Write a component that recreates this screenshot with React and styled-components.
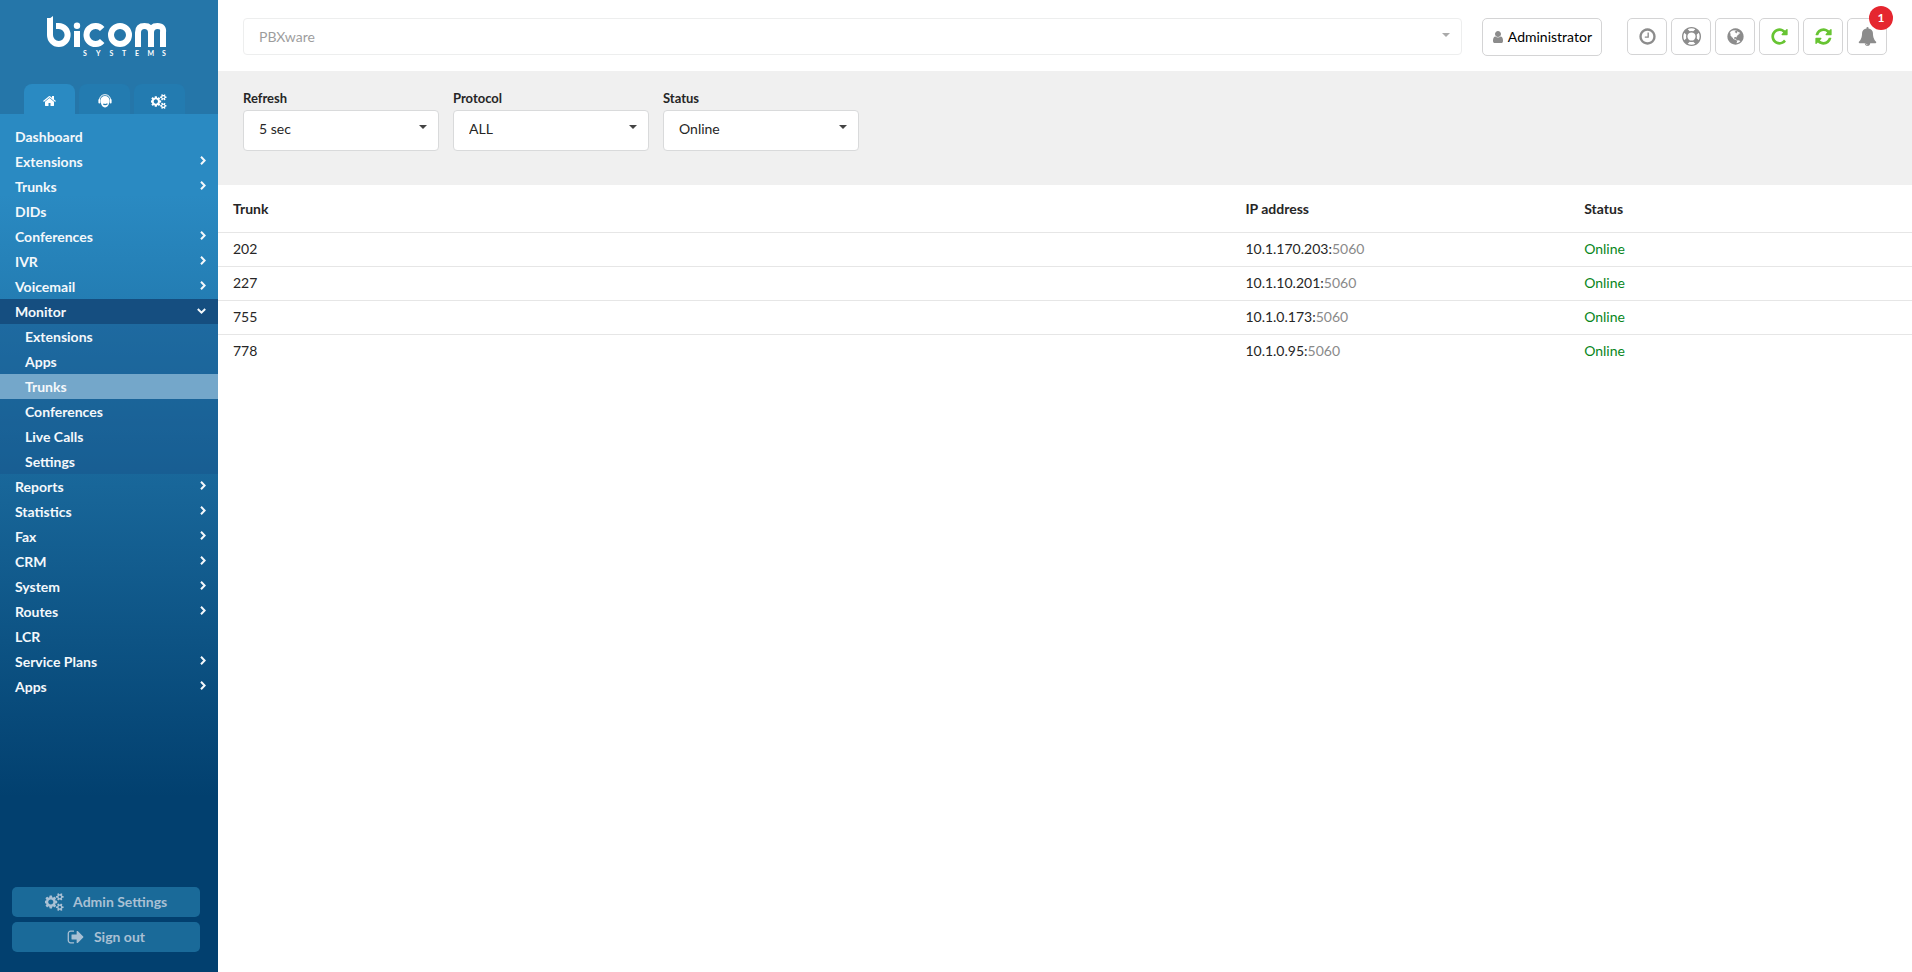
import React, { useState } from 'react'
import styled, { createGlobalStyle } from 'styled-components'

const paths = {
    home: 'M1408 992v480q0 26-19 45t-45 19h-384v-384h-256v384h-384q-26 0-45-19t-19-45v-480q0-1 .5-3t.5-3l575-474 575 474q1 2 1 6zm223-69l-62 74q-8 9-21 11h-3q-13 0-21-7l-692-577-692 577q-12 8-24 7-13-2-21-11l-62-74q-8-10-7-23.5t11-21.5l719-599q32-26 76-26t76 26l244 204v-195q0-14 9-23t23-9h192q14 0 23 9t9 23v408l219 182q10 8 11 21.5t-7 23.5z',
    cogs: 'M832 896q0-106-75-181t-181-75-181 75-75 181 75 181 181 75 181-75 75-181zm768 512q0-52-38-90t-90-38-90 38-38 90q0 53 37.5 90.5t90.5 37.5 90.5-37.5 37.5-90.5zm0-1024q0-52-38-90t-90-38-90 38-38 90q0 53 37.5 90.5t90.5 37.5 90.5-37.5 37.5-90.5zm-384 421v185q0 10-7 19.5t-16 10.5l-155 24q-11 35-32 76 34 48 90 115 7 11 7 20 0 12-7 19-23 30-82.5 89.5t-78.5 59.5q-11 0-21-7l-115-90q-37 19-77 31-11 108-23 155-7 24-30 24h-186q-11 0-20-7.5t-10-17.5l-23-153q-34-10-75-31l-118 89q-7 7-20 7-11 0-21-8-144-133-144-160 0-9 7-19 10-14 41-53t47-61q-23-44-35-82l-152-24q-10-1-17-9.5t-7-19.5v-185q0-10 7-19.5t16-10.5l155-24q11-35 32-76-34-48-90-115-7-11-7-20 0-12 7-20 22-30 82-89t79-59q11 0 21 7l115 90q34-18 77-32 11-108 23-154 7-24 30-24h186q11 0 20 7.5t10 17.5l23 153q34 10 75 31l118-89q8-7 20-7 11 0 21 8 144 133 144 160 0 8-7 19-12 16-42 54t-45 60q23 48 34 82l152 23q10 2 17 10.5t7 19.5zm640 533v140q0 16-149 31-12 27-30 52 51 113 51 138 0 4-4 7-122 71-124 71-8 0-46-47t-52-68q-20 2-30 2t-30-2q-14 21-52 68t-46 47q-2 0-124-71-4-3-4-7 0-25 51-138-18-25-30-52-149-15-149-31v-140q0-16 149-31 13-29 30-52-51-113-51-138 0-4 4-7 4-2 35-20t59-34 30-16q8 0 46 46.5t52 67.5q20-2 30-2t30 2q51-71 92-112l6-2q4 0 124 70 4 3 4 7 0 25-51 138 17 23 30 52 149 15 149 31zm0-1024v140q0 16-149 31-12 27-30 52 51 113 51 138 0 4-4 7-122 71-124 71-8 0-46-47t-52-68q-20 2-30 2t-30-2q-14 21-52 68t-46 47q-2 0-124-71-4-3-4-7 0-25 51-138-18-25-30-52-149-15-149-31v-140q0-16 149-31 13-29 30-52-51-113-51-138 0-4 4-7 4-2 35-20t59-34 30-16q8 0 46 46.5t52 67.5q20-2 30-2t30 2q51-71 92-112l6-2q4 0 124 70 4 3 4 7 0 25-51 138 17 23 30 52 149 15 149 31z',
    signOut: 'M704 1440q0 4 1 20t.5 26.5-3 23.5-10 19.5-20.5 6.5h-320q-119 0-203.5-84.5t-84.5-203.5v-704q0-119 84.5-203.5t203.5-84.5h320q13 0 22.5 9.5t9.5 22.5q0 4 1 20t.5 26.5-3 23.5-10 19.5-20.5 6.5h-320q-66 0-113 47t-47 113v704q0 66 47 113t113 47h312l11.5 1 11.5 3 8 5.5 7 9 2 13.5zm928-544q0 26-19 45l-544 544q-19 19-45 19t-45-19-19-45v-288h-448q-26 0-45-19t-19-45v-384q0-26 19-45t45-19h448v-288q0-26 19-45t45-19 45 19l544 544q19 19 19 45z',
    user: 'M1536 1399q0 109-62.5 187t-150.5 78h-854q-88 0-150.5-78t-62.5-187q0-85 8.5-160.5t31.5-152 58.5-131 94-89 134.5-34.5q131 128 313 128t313-128q76 0 134.5 34.5t94 89 58.5 131 31.5 152 8.5 160.5zm-256-887q0 159-112.5 271.5t-271.5 112.5-271.5-112.5-112.5-271.5 112.5-271.5 271.5-112.5 271.5 112.5 112.5 271.5z',
    clock: 'M1024 544v448q0 14-9 23t-23 9h-320q-14 0-23-9t-9-23v-64q0-14 9-23t23-9h224v-352q0-14 9-23t23-9h64q14 0 23 9t9 23zm416 352q0-148-73-273t-198-198-273-73-273 73-198 198-73 273 73 273 198 198 273 73 273-73 198-198 73-273zm224 0q0 209-103 385.5t-279.5 279.5-385.5 103-385.5-103-279.5-279.5-103-385.5 103-385.5 279.5-279.5 385.5-103 385.5 103 279.5 279.5 103 385.5z',
    lifeRing: 'M896 0q182 0 348 71t286 191 191 286 71 348-71 348-191 286-286 191-348 71-348-71-286-191-191-286-71-348 71-348 191-286 286-191 348-71zm0 128q-190 0-361 90l194 194q82-28 167-28t167 28l194-194q-171-90-361-90zm-678 1129l194-194q-28-82-28-167t28-167l-194-194q-90 171-90 361t90 361zm678 407q190 0 361-90l-194-194q-82 28-167 28t-167-28l-194 194q171 90 361 90zm0-384q159 0 271.5-112.5t112.5-271.5-112.5-271.5-271.5-112.5-271.5 112.5-112.5 271.5 112.5 271.5 271.5 112.5zm484-217l194 194q90-171 90-361t-90-361l-194 194q28 82 28 167t-28 167z',
    globe: 'M896 128q209 0 385.5 103t279.5 279.5 103 385.5-103 385.5-279.5 279.5-385.5 103-385.5-103-279.5-279.5-103-385.5 103-385.5 279.5-279.5 385.5-103zm274 521q-2 1-9.5 9.5t-13.5 9.5q2 0 4.5-5t5-11 3.5-7q6-7 22-15 14-6 52-12 34-8 51 11-2-2 9.5-13t14.5-12q3-2 15-4.5t15-7.5l2-22q-12 1-17.5-7t-6.5-21q0 2-6 8 0-7-4.5-8t-11.5 1-9 1q-10-3-15-7.5t-8-16.5-4-15q-2-5-9.5-11t-9.5-10q-1-2-2.5-5.5t-3-6.5-4-5.5-5.5-2.5-7 5-7.5 10-4.5 5q-3-2-6-1.5t-4.5 1-4.5 3-5 3.5q-3 2-8.5 3t-8.5 2q15-5-1-11-10-4-16-3 9-4 7.5-12t-8.5-14h5q-1-4-8.5-8.5t-17.5-8.5-13-6q-8-5-34-9.5t-33-.5q-5 6-4.5 10.5t4 14 3.5 12.5q1 6-5.5 13t-6.5 12q0 7 14 15.5t10 21.5q-3 8-16 16t-16 12q-5 8-1.5 18.5t10.5 16.5q2 2 1.5 4t-3.5 4.5-5.5 4-6.5 3.5l-3 2q-11 5-20.5-6t-13.5-26q-7-25-16-30-23-8-29 1-5-13-41-26-25-9-58-4 6-1 0-15-7-15-19-12 3-6 4-17.5t1-13.5q3-13 12-23 1-1 7-8.5t9.5-13.5.5-6q35 4 50-11 5-5 11.5-17t10.5-17q9-6 14-5.5t14.5 5.5 14.5 5q14 1 15.5-11t-7.5-20q12 1 3-17-4-7-8-9-12-4-27 5-8 4 2 8-1-1-9.5 10.5t-16.5 17.500-16-5q-1-1-5.5-13.5t-9.500-13.5q-8 0-16 15 3-8-11-15t-24-8q19-12-8-27-7-4-20.5-5t-19.500 4q-5 7-5.500 11.500t5 8 10.500 5.500 11.500 4 8.500 3q14 10 8 14-2 1-8.500 3.500t-11.500 4.500-6 4q-3 4 0 14t-2 14q-5-5-9-17.500t-7-16.500q7 9-25 6l-10-1q-4 0-16 2t-20.500 1-13.500-8q-4-8 0-20 1-4 4-2-4-3-11-9.500t-10-8.500q-46 15-94 41 6 1 12-1 5-2 13-6.500t10-5.500q34-14 42-7l5-5q14 16 20 25-7-4-30-1-20 6-22 12 7 12 5 18-4-3-11.500-10t-14.500-11-15-5q-16 0-22 1-146 80-235 222 7 7 12 8 4 1 5 9t2.500 11 11.500-3q9 8 3 19 1-1 44 27 19 17 21 21 3 11-10 18-1-2-9-9t-9-4q-3 5 .5 18.500t10.500 12.500q-7 0-9.500 16t-2.500 35.500-1 23.500l2 1q-3 12 5.500 34.500t21.500 19.500q-13 3 20 43 6 8 8 9 3 2 12 7.500t15 10 10 10.500q4 5 10 22.500t14 23.500q-2 6 9.500 20t10.500 23q-1 0-2.500 1t-2.500 1q3 7 15.500 14t15.500 13q1 3 2 10t3 11 8 2q2-20-24-62-15-25-17-29-3-5-5.500-15.500t-4.500-14.500q2 0 6 1.500t8.500 3.500 7.500 4 2 3q-3 7 2 17.500t12 18.500 17 19 12 13q6 6 14 19.500t0 13.500q9 0 20 10.500t17 19.500q5 8 8 26t5 24q2 7 8.500 13.500t12.500 9.500l16 8 13 7q5 2 18.500 10.500t21.500 11.500q10 4 16 4t14.500-2.500 13.500-3.500q15-2 29 15t21 21q36 19 55 11-2 1 .5 7.500t8 15.500 9 14.500 5.500 8.500q5 6 18 15t18 15q6-4 7-9-3 8 7 20t18 10q14-3 14-32-31 15-49-18 0-1-2.500-5.500t-4-8.500-2.500-8.500 0-7.500 5-3q9 0 10-3.500t-2-12.500-4-13q-1-8-11-20t-12-15q-5 9-16 8t-16-9q0 1-1.500 5.500t-1.500 6.500q-13 0-15-1 1-3 2.500-17.500t3.500-22.500q1-4 5.500-12t7.500-14.500 4-12.500-4.500-9.500-17.500-2.500q-19 1-26 20-1 3-3 10.500t-5 11.500-9 7q-7 3-24 2t-24-5q-13-8-22.500-29t-9.500-37q0-10 2.500-26.500t3-25-5.500-24.500q3-2 9-9.500t10-10.500q2-1 4.500-1.500t4.500 0 4-1.500 3-6q-1-1-4-3-3-3-4-3 7 3 28.500-1.500t27.500 1.500q15 11 22-2 0-1-2.500-9.500t-.5-13.500q5 27 29 9 3 3 15.500 5t17.500 5q3 2 7 5.500t5.500 4.500 5-.5 8.500-6.500q10 14 12 24 11 40 19 44 7 3 11 2t4.500-9.500 0-14-1.500-12.500l-1-8v-18l-1-8q-15-3-18.500-12t1.500-18.500 15-18.500q1-1 8-3.500t15.500-6.500 12.500-8q21-19 15-35 7 0 11-9-1 0-5-3t-7.500-5-4.500-2q9-5 2-16 5-3 7.500-11t7.500-10q9 12 21 2 8-8 1-16 5-7 20.500-10.500t18.500-9.500q7 2 8-2t1-12 3-12q4-5 15-9t13-5l17-11q3-4 0-4 18 2 31-11 10-11-6-20 3-6-3-9.500t-15-5.500q3-1 11.500-.5t10.500-1.500q15-10-7-16-17-5-43 12zm-163 877q206-36 351-189-3-3-12.500-4.500t-12.500-3.500q-18-7-24-8 1-7-2.500-13t-8-9-12.500-8-11-7q-2-2-7-6t-7-5.500-7.500-4.500-8.500-2-10 1l-3 1q-3 1-5.500 2.500t-5.500 3-4 3 0 2.500q-21-17-36-22-5-1-11-5.500t-10.500-7-10-1.500-11.500 7q-5 5-6 15t-2 13q-7-5 0-17.500t2-18.500q-3-6-10.500-4.500t-12 4.500-11.500 8.500-9 6.500-8.500 5.500-8.500 7.500q-3 4-6 12t-5 11q-2-4-11.500-6.500t-9.500-5.500q2 10 4 35t5 38q7 31-12 48-27 25-29 40-4 22 12 26 0 7-8 20.500t-7 21.500q0 6 2 16z',
    repeat: 'M1664 256v448q0 26-19 45t-45 19h-448q-42 0-59-40-17-39 14-69l138-138q-148-137-349-137-104 0-198.5 40.5t-163.5 109.5-109.5 163.5-40.5 198.5 40.5 198.5 109.5 163.5 163.5 109.5 198.5 40.5q119 0 225-52t179-147q7-10 23-12 15 0 25 9l137 138q9 8 9.5 20.5t-7.5 22.5q-109 132-264 204.5t-327 72.5q-156 0-298-61t-245-164-164-245-61-298 61-298 164-245 245-164 298-61q147 0 284.5 55.5t244.5 156.5l130-129q29-31 70-14 39 17 39 59z',
    refresh: 'M1639 1056q0 5-1 7-64 268-268 434.5t-478 166.5q-146 0-282.5-55t-243.5-157l-129 129q-19 19-45 19t-45-19-19-45v-448q0-26 19-45t45-19h448q26 0 45 19t19 45-19 45l-137 137q71 66 161 102t187 36q134 0 250-65t186-179q11-17 53-117 8-23 30-23h192q13 0 22.5 9.5t9.5 22.5zm25-800v448q0 26-19 45t-45 19h-448q-26 0-45-19t-19-45 19-45l138-138q-148-137-349-137-134 0-250 65t-186 179q-11 17-53 117-8 23-30 23h-199q-13 0-22.5-9.5t-9.5-22.5v-7q65-268 270-434.5t480-166.5q146 0 284 55.5t245 156.5l130-129q19-19 45-19t45 19 19 45z',
    bell: 'M912 1696q0-16-16-16-59 0-101.5-42.5t-42.5-101.5q0-16-16-16t-16 16q0 73 51.5 124.5t124.5 51.5q16 0 16-16zm816-288q0 52-38 90t-90 38h-448q0 106-75 181t-181 75-181-75-75-181h-448q-52 0-90-38t-38-90q50-42 91-88t85-119.5 74.5-158.5 50-206 19.5-260q0-152 117-282.5t307-158.5q-8-19-8-39 0-40 28-68t68-28 68 28 28 68q0 20-8 39 190 28 307 158.5t117 282.5q0 139 19.5 260t50 206 74.5 158.5 85 119.5 91 88z',
}

const Icon = ({ name, size = 16 }) => {
    const width = name === 'cogs' ? 1920 : 1792
    return (
        <svg width={size * width / 1792} height={size} viewBox={`0 0 ${width} 1792`} fill="currentColor" aria-hidden="true">
            <path d={paths[name]} />
        </svg>
    )
}

const Headset = () => (
    <svg width="14" height="14" viewBox="0 0 14 14" fill="none" aria-hidden="true">
        <path d="M1.400 6.500C1.400 2.900 3.600 .7 7 .7s5.600 2.200 5.600 5.800" stroke="#fff" strokeWidth="1" />
        <path d="M7 2c2.700 0 4.400 1.700 4.400 4.500 0 3.600-1.600 6.900-4.400 6.900S2.600 10.100 2.600 6.500C2.600 3.700 4.300 2 7 2z" fill="#fff" />
        <rect x="0.400" y="5" width="2" height="4.500" rx="1" fill="#fff" />
        <rect x="11.600" y="5" width="2" height="4.500" rx="1" fill="#fff" />
        <path d="M5.300 10q1.700 1.200 4.200-.2" stroke="#237bb0" strokeWidth="1.200" />
    </svg>
)

const Arrow = ({ open }) => (
    <svg width={open ? 9 : 6} height={open ? 6 : 9} viewBox={open ? '0 0 9 6' : '0 0 6 9'} fill="none" stroke="currentColor" strokeWidth="2" aria-hidden="true">
        <path d={open ? 'M.8 1L4.500 4.600 8.200 1' : 'M1 .8L4.600 4.500 1 8.200'} />
    </svg>
)

const Logo = () => (
    <svg width="124" height="42" viewBox="0 0 124 42" role="img" aria-label="bicom systems">
        <g fill="none" stroke="#fff" strokeWidth="6">
            <path d="M6 2v17a8.800 9 0 1 0 8.800-9h-2.800" />
            <path d="M33 15v16M58.200 13A9 9 0 1 0 58.200 25" />
            <circle cx="76" cy="19" r="9" />
            <path d="M94 31V16.500q0-6.500 6.500-6.500T107 16.500v14.500M107 16.500q0-6.500 6.500-6.500T119 16.500v14.500" />
        </g>
        <path d="M3 4.500L9 0v6H3z" fill="#fff" />
        <circle cx="33" cy="9.800" r="3.200" fill="#fff" />
        <text x="39 52 65.500 78 91 103.500 118" y="40" fill="#fff" fontSize="7" fontWeight="700" fontFamily="Lato, sans-serif">SYSTEMS</text>
    </svg>
)

const menu = [
    { name: 'Dashboard', leaf: true },
    { name: 'Extensions' },
    { name: 'Trunks' },
    { name: 'DIDs', leaf: true },
    { name: 'Conferences' },
    { name: 'IVR' },
    { name: 'Voicemail' },
    { name: 'Monitor', children: ['Extensions', 'Apps', 'Trunks', 'Conferences', 'Live Calls', 'Settings'] },
    { name: 'Reports' },
    { name: 'Statistics' },
    { name: 'Fax' },
    { name: 'CRM' },
    { name: 'System' },
    { name: 'Routes' },
    { name: 'LCR', leaf: true },
    { name: 'Service Plans' },
    { name: 'Apps' },
]

const trunks = [
    { trunk: '202', ip: '10.1.170.203', port: '5060', status: 'Online' },
    { trunk: '227', ip: '10.1.10.201', port: '5060', status: 'Online' },
    { trunk: '755', ip: '10.1.0.173', port: '5060', status: 'Online' },
    { trunk: '778', ip: '10.1.0.95', port: '5060', status: 'Online' },
]

const Sidebar = () => (
    <Aside>
        <Brand>
            <Logo />
            <Tabs>
                <Tab $active aria-label="Home"><Icon name="home" size={14} /></Tab>
                <Tab aria-label="Agents"><Headset /></Tab>
                <Tab aria-label="Settings"><Icon name="cogs" size={15} /></Tab>
            </Tabs>
        </Brand>
        <Menu>
            {menu.map(item => (
                <li key={item.name}>
                    <MenuLink href="#" $open={!!item.children}>
                        {item.name}
                        {item.leaf ? null : <Arrow open={!!item.children} />}
                    </MenuLink>
                    {item.children ?
                        <SubMenu>
                            {item.children.map(name => (
                                <li key={name}><SubLink href="#" $active={name === 'Trunks'}>{name}</SubLink></li>
                            ))}
                        </SubMenu> : null}
                </li>
            ))}
        </Menu>
        <AsideFooter>
            <AsideButton><Icon name="cogs" size={18} />Admin Settings</AsideButton>
            <AsideButton><Icon name="signOut" size={18} />Sign out</AsideButton>
        </AsideFooter>
    </Aside>
)

const Filter = ({ id, label, options, initial }) => {
    const [value, setValue] = useState(initial)
    return (
        <Field>
            <label htmlFor={id}>{label}</label>
            <SelectBox>
                <Select id={id} value={value} onChange={e => setValue(e.target.value)}>
                    {options.map(option => <option key={option}>{option}</option>)}
                </Select>
                <Caret />
            </SelectBox>
        </Field>
    )
}

const App = () => (
    <Layout>
        <GlobalStyle />
        <Sidebar />
        <Main>
            <TopBar>
                <ServerBox>
                    <ServerSelect aria-label="Server" disabled><option>PBXware</option></ServerSelect>
                    <Caret />
                </ServerBox>
                <UserButton><Icon name="user" size={14} />Administrator</UserButton>
                <Tools>
                    <ToolButton aria-label="Time"><Icon name="clock" size={19} /></ToolButton>
                    <ToolButton aria-label="Help"><Icon name="lifeRing" size={19} /></ToolButton>
                    <ToolButton aria-label="Language"><Icon name="globe" size={19} /></ToolButton>
                    <ToolButton $green aria-label="Reload"><Icon name="repeat" size={19} /></ToolButton>
                    <ToolButton $green aria-label="Restart"><Icon name="refresh" size={19} /></ToolButton>
                    <ToolButton aria-label="Notifications"><Icon name="bell" size={19} /><Badge>1</Badge></ToolButton>
                </Tools>
            </TopBar>
            <Filters>
                <Filter id="refresh" label="Refresh" initial="5 sec" options={['5 sec', '10 sec', '30 sec']} />
                <Filter id="protocol" label="Protocol" initial="ALL" options={['ALL', 'SIP', 'IAX']} />
                <Filter id="status" label="Status" initial="Online" options={['Online', 'Offline']} />
            </Filters>
            <Table>
                <thead>
                    <tr>
                        <th>Trunk</th>
                        <th>IP address</th>
                        <th>Status</th>
                    </tr>
                </thead>
                <tbody>
                    {trunks.map(row => (
                        <tr key={row.trunk}>
                            <td>{row.trunk}</td>
                            <td>{row.ip}:<Port>{row.port}</Port></td>
                            <Status>{row.status}</Status>
                        </tr>
                    ))}
                </tbody>
            </Table>
        </Main>
    </Layout>
)

export default App

const GlobalStyle = createGlobalStyle`
*{
    box-sizing:border-box;
}
body{
    margin:0;
    background:#fff;
    color:#262626;
    font-family:Lato, sans-serif;
    font-size:14px;
    line-height:18px;
}
button,select{
    font:inherit;
}
ul{
    list-style:none;
    margin:0;
    padding:0;
}
svg{
    display:block;
    flex:none;
}
`
const Layout = styled.div`
display:flex;
min-height:100vh;
`
const Aside = styled.aside`
display:flex;
flex-direction:column;
flex:none;
width:218px;
background:linear-gradient(#2a8ac2 0%, #2a8ac2 20%, #186699 50%, #02406f 82%, #02406f 100%);
color:#fff;
`
const Brand = styled.div`
display:flex;
flex-direction:column;
justify-content:space-between;
height:114px;
padding:16px 24px 0;
background:#2576a9;
svg[role=img]{
    margin-left:20px;
}
`
const Tabs = styled.div`
display:flex;
gap:4px;
`
const Tab = styled.button.attrs({ type: 'button' })`
display:flex;
align-items:center;
justify-content:center;
width:51px;
height:30px;
padding:4px 0 0;
border:0;
border-radius:8px 8px 0 0;
background:${props => props.$active ? '#2a8ac2' : '#237bb0'};
color:#fff;
`
const Menu = styled.ul`
padding-top:10px;
flex:1;
`
const MenuLink = styled.a`
display:flex;
align-items:center;
justify-content:space-between;
height:25px;
padding:0 12px 0 15px;
background:${props => props.$open ? '#154e80' : 'transparent'};
color:#f4f8fb;
font-weight:700;
text-decoration:none;
svg{
    margin-bottom:2px;
}
`
const SubMenu = styled.ul`
background:rgba(24,78,132,.35);
`
const SubLink = styled(MenuLink)`
padding-left:25px;
background:${props => props.$active ? '#74a7ca' : 'transparent'};
`
const AsideFooter = styled.div`
display:flex;
flex-direction:column;
gap:5px;
padding:20px 18px 20px 12px;
`
const AsideButton = styled.button.attrs({ type: 'button' })`
display:flex;
align-items:center;
justify-content:center;
gap:9px;
height:30px;
padding:0;
border:0;
border-radius:5px;
background:#1a6a99;
color:#a9c0d4;
font-weight:700;
`
const Main = styled.main`
flex:1;
min-width:0;
`
const TopBar = styled.header`
display:flex;
align-items:center;
height:71px;
padding:2px 25px 0;
`
const SelectBox = styled.div`
position:relative;
display:flex;
`
const ServerBox = styled(SelectBox)`
flex:1;
margin-right:20px;
opacity:.45;
`
const Select = styled.select`
appearance:none;
width:100%;
height:41px;
padding:0 30px 3px 15px;
border:1px solid #d9dadb;
border-radius:4px;
background:#fff;
color:#262626;
`
const ServerSelect = styled(Select)`
height:37px;
padding-bottom:0;
opacity:1;
`
const Caret = styled.span`
position:absolute;
right:12px;
top:15px;
border:4px solid transparent;
border-top-color:#444;
border-bottom:0;
pointer-events:none;
`
const UserButton = styled.button.attrs({ type: 'button' })`
display:flex;
align-items:center;
gap:3px;
height:38px;
margin-right:25px;
padding:0 9px 0 8px;
border:1px solid #d4d4d5;
border-radius:5px;
background:#fff;
color:#000;
svg{
    color:#8c8c8c;
}
`
const Tools = styled.div`
display:flex;
gap:4px;
`
const ToolButton = styled.button.attrs({ type: 'button' })`
position:relative;
display:flex;
align-items:center;
justify-content:center;
width:40px;
height:37px;
padding:0;
border:1px solid #d4d4d5;
border-radius:5px;
background:#fff;
color:${props => props.$green ? '#67c432' : '#8c8c8c'};
`
const Badge = styled.span`
position:absolute;
top:-13px;
right:-7px;
width:24px;
height:24px;
border-radius:50%;
background:#e5262f;
color:#fff;
font-size:12px;
font-weight:700;
line-height:24px;
`
const Filters = styled.section`
display:flex;
gap:14px;
padding:18px 25px 34px;
background:#f0f0f0;
`
const Field = styled.div`
width:196px;
label{
    display:block;
    margin-bottom:3px;
    font-size:13px;
    font-weight:700;
}
`
const Table = styled.table`
width:100%;
table-layout:fixed;
border-collapse:separate;
border-spacing:0;
th,td{
    width:20%;
    height:34px;
    padding:0 11px 2px;
    border-bottom:1px solid #e6e6e6;
    text-align:left;
}
th{
    height:48px;
    padding-bottom:0;
}
th:first-child,td:first-child{
    width:60%;
    padding-left:15px;
}
tbody tr:last-child td{
    border-bottom:0;
}
`
const Port = styled.span`
color:#8a8a8a;
`
const Status = styled.td`
color:#07861b;
`
